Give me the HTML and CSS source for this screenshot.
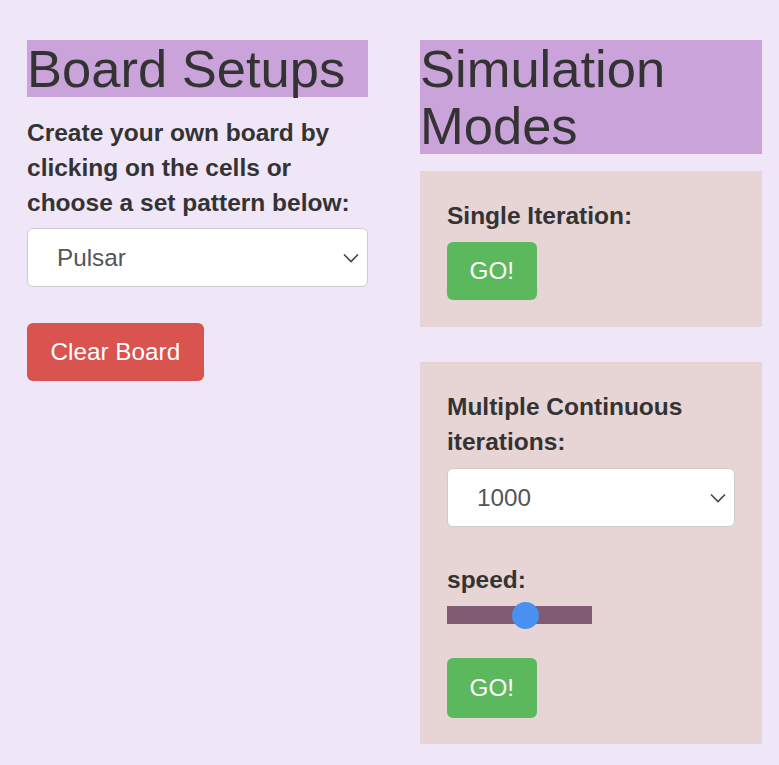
FILE: index.html
```html
<!DOCTYPE html>
<html>
<head>
<meta charset="utf-8">
<link rel="stylesheet" href="styles.css">
</head>
<body>
<div class="page">
  <div class="col">
    <h1 class="title">Board Setups</h1>
    <p class="label intro">Create your own board by<br>clicking on the cells or<br>choose a set pattern below:</p>
    <div class="select-wrap">
      <select class="select">
        <option>Pulsar</option>
      </select>
      <svg class="chev" width="16" height="10" viewBox="0 0 16 10"><path d="M1 1.5 L8 8.5 L15 1.5" fill="none" stroke="#444" stroke-width="1.6"/></svg>
    </div>
    <button class="btn btn-red clear">Clear Board</button>
  </div>
  <div class="col">
    <h1 class="title">Simulation Modes</h1>
    <div class="panel first">
      <p class="label">Single Iteration:</p>
      <button class="btn btn-green">GO!</button>
    </div>
    <div class="panel second">
      <p class="label">Multiple Continuous<br>iterations:</p>
      <div class="select-wrap">
        <select class="select">
          <option>1000</option>
        </select>
        <svg class="chev" width="16" height="10" viewBox="0 0 16 10"><path d="M1 1.5 L8 8.5 L15 1.5" fill="none" stroke="#444" stroke-width="1.6"/></svg>
      </div>
      <p class="label speed">speed:</p>
      <input class="range" type="range" min="0" max="100" value="55">
      <button class="btn btn-green go2">GO!</button>
    </div>
  </div>
</div>
</body>
</html>
```
FILE: styles.css
```css
* { box-sizing: border-box; }
html, body {
  margin: 0;
  background: #efe6f7;
}
body {
  font-family: "Liberation Sans", Arial, sans-serif;
  color: #333;
}
.page {
  display: flex;
  gap: 52px;
  padding: 40px 17px 0 27px;
}
.col {
  width: 341px;
  flex: 0 0 auto;
  display: flex;
  flex-direction: column;
  align-items: flex-start;
}
.col + .col { width: 342px; }
.title {
  margin: 0;
  width: 100%;
  font-size: 52.5px;
  line-height: 57px;
  font-weight: normal;
  background: #c9a3d9;
  color: #333;
}
.label {
  margin: 0;
  font-size: 24.5px;
  line-height: 35px;
  font-weight: bold;
  color: #333;
}
.intro { margin: 18px 0 8px; }
.select-wrap {
  position: relative;
  width: 100%;
}
.select {
  display: block;
  width: 100%;
  height: 59px;
  margin: 0;
  padding: 0 0 0 29px;
  border: 1px solid #ccc;
  border-radius: 6px;
  background: #fff;
  font-family: "Liberation Sans", Arial, sans-serif;
  font-size: 24.3px;
  color: #555;
  -webkit-appearance: none;
  appearance: none;
}
.chev {
  position: absolute;
  right: 9px;
  top: 25px;
  pointer-events: none;
}
.btn {
  height: 58px;
  padding: 0 22.5px;
  border: none;
  border-radius: 6px;
  font-family: "Liberation Sans", Arial, sans-serif;
  font-size: 24.3px;
  color: #fff;
}
.btn-red { background: #d9534f; }
.btn-green { background: #5cb85c; }
.clear { margin-top: 36px; padding: 0 23.5px; }
.panel {
  width: 100%;
  background: #e7d5d6;
  padding: 27px;
  display: flex;
  flex-direction: column;
  align-items: flex-start;
}
.panel.first { margin-top: 17px; }
.panel.first .btn { margin-top: 9px; }
.panel.second { margin-top: 35px; padding-bottom: 26px; }
.panel.second .select-wrap { margin-top: 9px; }
.speed { margin-top: 35px; }
.range {
  -webkit-appearance: none;
  appearance: none;
  width: 145px;
  height: 18px;
  margin: 9px 0 0 0;
  background: #7f5c73;
  outline: none;
}
.range::-webkit-slider-thumb {
  -webkit-appearance: none;
  appearance: none;
  width: 27px;
  height: 27px;
  border-radius: 50%;
  background: #4a90f0;
  border: none;
}
.go2 { margin-top: 34px; height: 60px; }
```
